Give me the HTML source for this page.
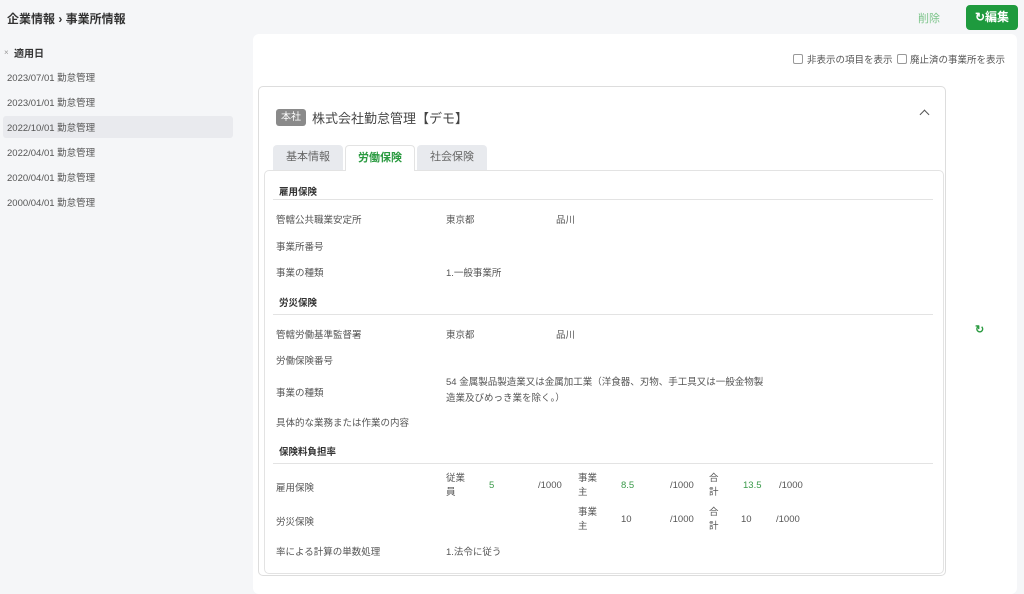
<!DOCTYPE html>
<html><head><meta charset="utf-8"><style>
*{margin:0;padding:0;box-sizing:border-box}
body{width:1024px;height:584px;overflow:hidden;background:#f5f6f8;font-family:"Liberation Sans","Noto Sans CJK JP",sans-serif;color:#444;position:relative}
.a{position:absolute;white-space:nowrap}
.s{font-size:9.5px;color:#555}
.g{color:#3a9a4a}
</style></head><body>
<div class="a" style="left:7px;top:10px;font-size:12px;font-weight:bold;color:#333">企業情報 › 事業所情報</div>
<div class="a" style="left:918px;top:10px;font-size:11px;color:#7cc48a">削除</div>
<div class="a" style="left:966px;top:5px;width:52px;height:25px;background:#1e9a3e;border-radius:4px;color:#fff;font-size:12px;font-weight:bold;line-height:25px;text-align:center">↻編集</div>

<div class="a" style="left:4px;top:48px;font-size:8px;color:#999">×</div>
<div class="a" style="left:14px;top:45px;font-size:10px;color:#333;font-weight:bold">適用日</div>
<div class="a" style="left:3px;top:116px;width:230px;height:22px;background:#e9eaee;border-radius:3px"></div>
<div class="a s" style="left:7px;top:70px">2023/07/01 勤怠管理</div>
<div class="a s" style="left:7px;top:95px">2023/01/01 勤怠管理</div>
<div class="a s" style="left:7px;top:120px">2022/10/01 勤怠管理</div>
<div class="a s" style="left:7px;top:145px">2022/04/01 勤怠管理</div>
<div class="a s" style="left:7px;top:170px">2020/04/01 勤怠管理</div>
<div class="a s" style="left:7px;top:195px">2000/04/01 勤怠管理</div>

<div class="a" style="left:253px;top:34px;width:764px;height:560px;background:#fff;border-radius:6px"></div>
<div class="a" style="left:793px;top:54px;width:10px;height:10px;border:1px solid #999;border-radius:2px"></div>
<div class="a s" style="left:807px;top:52px">非表示の項目を表示</div>
<div class="a" style="left:897px;top:54px;width:10px;height:10px;border:1px solid #999;border-radius:2px"></div>
<div class="a s" style="left:910px;top:52px">廃止済の事業所を表示</div>

<div class="a" style="left:258px;top:86px;width:688px;height:490px;border:1px solid #ddd;border-radius:5px"></div>
<div class="a" style="left:276px;top:109px;width:30px;height:17px;background:#8a8a8a;color:#fff;font-size:10px;line-height:17px;text-align:center;border-radius:3px">本社</div>
<div class="a" style="left:312px;top:108px;font-size:13px;color:#444">株式会社勤怠管理【デモ】</div>
<div class="a" style="left:921px;top:111px;width:7px;height:7px;border-left:1.5px solid #555;border-top:1.5px solid #555;transform:rotate(45deg)"></div>

<div class="a" style="left:273px;top:145px;width:70px;height:25px;background:#e8eaee;border-radius:4px 4px 0 0;font-size:11px;color:#666;text-align:center;line-height:25px">基本情報</div>
<div class="a" style="left:345px;top:145px;width:70px;height:26px;background:#fff;border:1px solid #e3e3e3;border-bottom:none;border-radius:4px 4px 0 0;font-size:11px;color:#2a9a40;font-weight:bold;text-align:center;line-height:25px;z-index:2">労働保険</div>
<div class="a" style="left:417px;top:145px;width:70px;height:25px;background:#e8eaee;border-radius:4px 4px 0 0;font-size:11px;color:#666;text-align:center;line-height:25px">社会保険</div>
<div class="a" style="left:264px;top:170px;width:680px;height:404px;border:1px solid #e3e3e3;border-radius:5px"></div>

<div class="a s" style="left:279px;top:184px;font-weight:bold;color:#333">雇用保険</div>
<div class="a" style="left:273px;top:199px;width:660px;height:1px;background:#e3e3e3"></div>
<div class="a s" style="left:276px;top:212px">管轄公共職業安定所</div>
<div class="a s" style="left:446px;top:212px">東京都</div>
<div class="a s" style="left:556px;top:212px">品川</div>
<div class="a s" style="left:276px;top:239px">事業所番号</div>
<div class="a s" style="left:276px;top:265px">事業の種類</div>
<div class="a s" style="left:446px;top:265px">1.一般事業所</div>
<div class="a s" style="left:279px;top:295px;font-weight:bold;color:#333">労災保険</div>
<div class="a" style="left:273px;top:314px;width:660px;height:1px;background:#e3e3e3"></div>
<div class="a s" style="left:276px;top:327px">管轄労働基準監督署</div>
<div class="a s" style="left:446px;top:327px">東京都</div>
<div class="a s" style="left:556px;top:327px">品川</div>
<div class="a s" style="left:276px;top:353px">労働保険番号</div>
<div class="a s" style="left:276px;top:385px">事業の種類</div>
<div class="a s" style="left:446px;top:375px;line-height:16px">54 金属製品製造業又は金属加工業（洋食器、刃物、手工具又は一般金物製<br>造業及びめっき業を除く。）</div>
<div class="a s" style="left:276px;top:415px">具体的な業務または作業の内容</div>
<div class="a s" style="left:279px;top:444px;font-weight:bold;color:#333">保険料負担率</div>
<div class="a" style="left:273px;top:463px;width:660px;height:1px;background:#e3e3e3"></div>

<div class="a s" style="left:276px;top:480px">雇用保険</div>
<div class="a s" style="left:446px;top:472px;line-height:14px">従業<br>員</div>
<div class="a s g" style="left:489px;top:480px">5</div>
<div class="a s" style="left:538px;top:480px">/1000</div>
<div class="a s" style="left:578px;top:472px;line-height:14px">事業<br>主</div>
<div class="a s g" style="left:621px;top:480px">8.5</div>
<div class="a s" style="left:670px;top:480px">/1000</div>
<div class="a s" style="left:709px;top:472px;line-height:14px">合<br>計</div>
<div class="a s g" style="left:743px;top:480px">13.5</div>
<div class="a s" style="left:779px;top:480px">/1000</div>

<div class="a s" style="left:276px;top:514px">労災保険</div>
<div class="a s" style="left:578px;top:506px;line-height:14px">事業<br>主</div>
<div class="a s" style="left:621px;top:514px">10</div>
<div class="a s" style="left:670px;top:514px">/1000</div>
<div class="a s" style="left:709px;top:506px;line-height:14px">合<br>計</div>
<div class="a s" style="left:741px;top:514px">10</div>
<div class="a s" style="left:776px;top:514px">/1000</div>

<div class="a s" style="left:276px;top:544px">率による計算の単数処理</div>
<div class="a s" style="left:446px;top:544px">1.法令に従う</div>

<div class="a" style="left:975px;top:323px;font-size:11px;color:#2a9a40;font-weight:bold">↻</div>
</body></html>
